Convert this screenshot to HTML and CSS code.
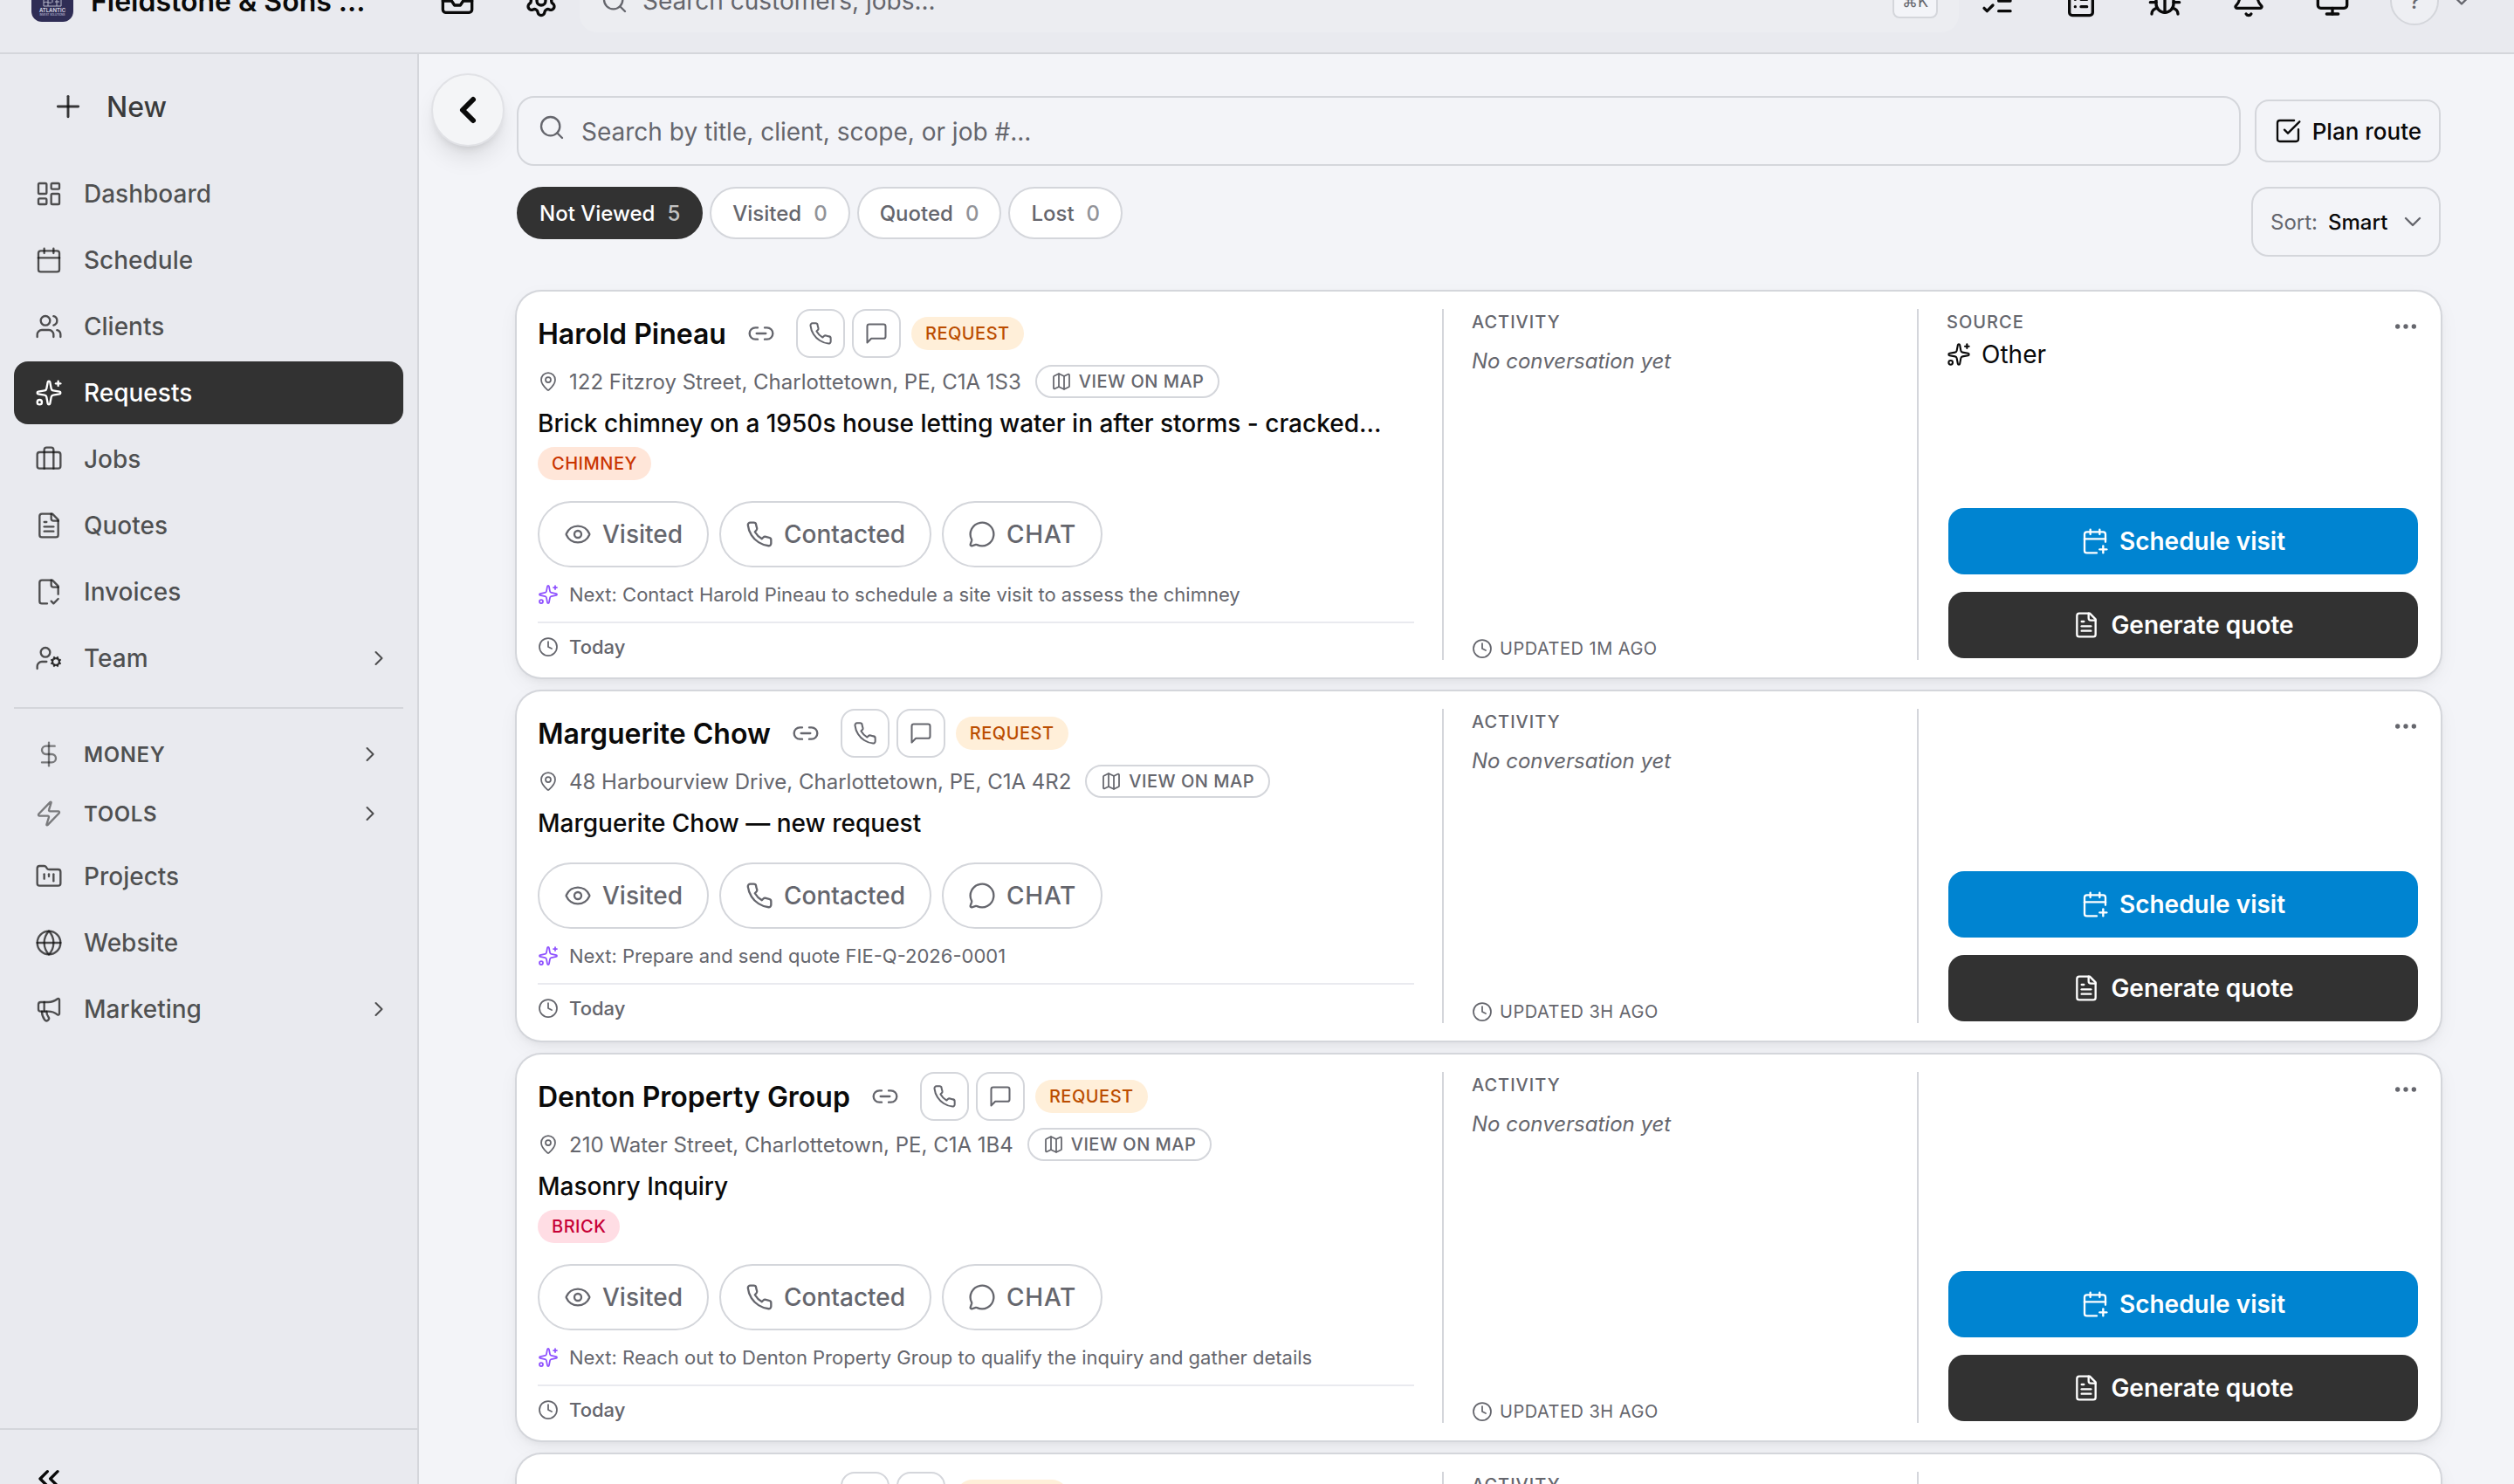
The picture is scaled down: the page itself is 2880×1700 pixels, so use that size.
FILE: index.html
```
<!DOCTYPE html>
<html lang="en">
<head>
  <meta charset="UTF-8">
  <title>Requests</title>
  <link rel="stylesheet" href="styles.css">
</head>
<body>
  <!-- icon sprite -->
  <svg class="sprite" aria-hidden="true">
    <symbol id="i-plus" viewBox="0 0 24 24"><path d="M5 12h14"/><path d="M12 5v14"/></symbol>
    <symbol id="i-dashboard" viewBox="0 0 24 24"><rect x="3" y="3" width="7" height="9" rx="1"/><rect x="14" y="3" width="7" height="5" rx="1"/><rect x="14" y="12" width="7" height="9" rx="1"/><rect x="3" y="16" width="7" height="5" rx="1"/></symbol>
    <symbol id="i-calendar" viewBox="0 0 24 24"><path d="M8 2v4"/><path d="M16 2v4"/><rect x="3" y="4" width="18" height="18" rx="2"/><path d="M3 10h18"/></symbol>
    <symbol id="i-users" viewBox="0 0 24 24"><path d="M16 21v-2a4 4 0 0 0-4-4H6a4 4 0 0 0-4 4v2"/><circle cx="9" cy="7" r="4"/><path d="M22 21v-2a4 4 0 0 0-3-3.87"/><path d="M16 3.13a4 4 0 0 1 0 7.75"/></symbol>
    <symbol id="i-sparkles" viewBox="0 0 24 24"><path d="M11.017 2.814a1 1 0 0 1 1.966 0l1.051 5.558a2 2 0 0 0 1.594 1.594l5.558 1.051a1 1 0 0 1 0 1.966l-5.558 1.051a2 2 0 0 0-1.594 1.594l-1.051 5.558a1 1 0 0 1-1.966 0l-1.051-5.558a2 2 0 0 0-1.594-1.594l-5.558-1.051a1 1 0 0 1 0-1.966l5.558-1.051a2 2 0 0 0 1.594-1.594z"/><path d="M20 2v4"/><path d="M22 4h-4"/><circle cx="4" cy="20" r="2"/></symbol>
    <symbol id="i-briefcase" viewBox="0 0 24 24"><path d="M16 20V4a2 2 0 0 0-2-2h-4a2 2 0 0 0-2 2v16"/><rect x="2" y="6" width="20" height="14" rx="2"/></symbol>
    <symbol id="i-file-text" viewBox="0 0 24 24"><path d="M15 2H6a2 2 0 0 0-2 2v16a2 2 0 0 0 2 2h12a2 2 0 0 0 2-2V7Z"/><path d="M14 2v4a2 2 0 0 0 2 2h4"/><path d="M10 9H8"/><path d="M16 13H8"/><path d="M16 17H8"/></symbol>
    <symbol id="i-file-check" viewBox="0 0 24 24"><path d="M10.5 22H6a2 2 0 0 1-2-2V4a2 2 0 0 1 2-2h9l5 5v7"/><path d="M14 2v4a2 2 0 0 0 2 2h4"/><path d="m14 20 2 2 4-4"/></symbol>
    <symbol id="i-user-cog" viewBox="0 0 24 24"><path d="M10 15H6a4 4 0 0 0-4 4v2"/><path d="m14.305 16.53.923-.382"/><path d="m15.228 13.852-.923-.383"/><path d="m16.852 12.228-.383-.923"/><path d="m16.852 17.772-.383.924"/><path d="m19.148 12.228.383-.923"/><path d="m19.53 18.696-.382-.924"/><path d="m20.772 13.852.924-.383"/><path d="m20.772 16.148.924.383"/><circle cx="18" cy="15" r="3"/><circle cx="9" cy="7" r="4"/></symbol>
    <symbol id="i-dollar" viewBox="0 0 24 24"><path d="M12 2v20"/><path d="M17 5H9.500a3.500 3.500 0 0 0 0 7h5a3.500 3.500 0 0 1 0 7H6"/></symbol>
    <symbol id="i-zap" viewBox="0 0 24 24"><path d="M4 14a1 1 0 0 1-.78-1.630l9.900-10.200a.5.5 0 0 1 .86.46l-1.920 6.020A1 1 0 0 0 13 10h7a1 1 0 0 1 .78 1.630l-9.900 10.200a.5.5 0 0 1-.86-.46l1.920-6.020A1 1 0 0 0 11 14z"/></symbol>
    <symbol id="i-folder" viewBox="0 0 24 24"><path d="M4 20h16a2 2 0 0 0 2-2V8a2 2 0 0 0-2-2h-7.930a2 2 0 0 1-1.660-.9l-.82-1.200A2 2 0 0 0 7.930 3H4a2 2 0 0 0-2 2v13c0 1.100.9 2 2 2Z"/><path d="M8 10v4"/><path d="M12 10v2"/><path d="M16 10v6"/></symbol>
    <symbol id="i-globe" viewBox="0 0 24 24"><circle cx="12" cy="12" r="10"/><path d="M12 2a14.500 14.500 0 0 0 0 20 14.500 14.500 0 0 0 0-20"/><path d="M2 12h20"/></symbol>
    <symbol id="i-megaphone" viewBox="0 0 24 24"><path d="M11 6a13 13 0 0 0 8.400-2.800A1 1 0 0 1 21 4v12a1 1 0 0 1-1.600.8A13 13 0 0 0 11 14H5a2 2 0 0 1-2-2V8a2 2 0 0 1 2-2z"/><path d="M6 14a12 12 0 0 0 2.400 7.200 2 2 0 0 0 3.200-2.400A8 8 0 0 1 10 14"/><path d="M8 6v8"/></symbol>
    <symbol id="i-chevron-right" viewBox="0 0 24 24"><path d="m9 18 6-6-6-6"/></symbol>
    <symbol id="i-chevron-left" viewBox="0 0 24 24"><path d="m15 18-6-6 6-6"/></symbol>
    <symbol id="i-chevron-down" viewBox="0 0 24 24"><path d="m6 9 6 6 6-6"/></symbol>
    <symbol id="i-chevrons-left" viewBox="0 0 24 24"><path d="m11 17-5-5 5-5"/><path d="m18 17-5-5 5-5"/></symbol>
    <symbol id="i-inbox" viewBox="0 0 24 24"><path d="M22 12h-6l-2 3h-4l-2-3H2"/><path d="M5.450 5.110 2 12v6a2 2 0 0 0 2 2h16a2 2 0 0 0 2-2v-6l-3.450-6.890A2 2 0 0 0 16.760 4H7.240a2 2 0 0 0-1.790 1.110z"/></symbol>
    <symbol id="i-settings" viewBox="0 0 24 24"><path d="M9.671 4.136a2.340 2.340 0 0 1 4.659 0 2.340 2.340 0 0 0 3.319 1.915 2.340 2.340 0 0 1 2.330 4.033 2.340 2.340 0 0 0 0 3.831 2.340 2.340 0 0 1-2.330 4.033 2.340 2.340 0 0 0-3.319 1.915 2.340 2.340 0 0 1-4.659 0 2.340 2.340 0 0 0-3.320-1.915 2.340 2.340 0 0 1-2.330-4.033 2.340 2.340 0 0 0 0-3.831A2.340 2.340 0 0 1 6.350 6.051a2.340 2.340 0 0 0 3.319-1.915"/><circle cx="12" cy="12" r="3"/></symbol>
    <symbol id="i-search" viewBox="0 0 24 24"><circle cx="11" cy="11" r="8"/><path d="m21 21-4.340-4.340"/></symbol>
    <symbol id="i-list-checks" viewBox="0 0 24 24"><path d="M13 5h8"/><path d="M13 12h8"/><path d="M13 19h8"/><path d="m3 17 2 2 4-4"/><path d="m3 7 2 2 4-4"/></symbol>
    <symbol id="i-clipboard" viewBox="0 0 24 24"><rect x="8" y="2" width="8" height="4" rx="1"/><path d="M16 4h2a2 2 0 0 1 2 2v14a2 2 0 0 1-2 2H6a2 2 0 0 1-2-2V6a2 2 0 0 1 2-2h2"/><path d="M12 11h4"/><path d="M12 16h4"/><path d="M8 11h.01"/><path d="M8 16h.01"/></symbol>
    <symbol id="i-bug" viewBox="0 0 24 24"><path d="m8 2 1.880 1.880"/><path d="M14.120 3.880 16 2"/><path d="M9 7.130v-1a3 3 0 1 1 6 0v1"/><path d="M12 20c-3.300 0-6-2.700-6-6v-3a4 4 0 0 1 4-4h4a4 4 0 0 1 4 4v3c0 3.300-2.700 6-6 6"/><path d="M12 20v-9"/><path d="M6.530 9C4.600 8.800 3 7.100 3 5"/><path d="M6 13H2"/><path d="M3 21c0-2.100 1.700-3.900 3.800-4"/><path d="M20.970 5c0 2.100-1.600 3.800-3.500 4"/><path d="M22 13h-4"/><path d="M17.200 17c2.100.1 3.800 1.900 3.800 4"/></symbol>
    <symbol id="i-bell" viewBox="0 0 24 24"><path d="M10.268 21a2 2 0 0 0 3.464 0"/><path d="M3.262 15.326A1 1 0 0 0 4 17h16a1 1 0 0 0 .74-1.673C19.410 13.956 18 12.499 18 8A6 6 0 0 0 6 8c0 4.499-1.411 5.956-2.738 7.326"/></symbol>
    <symbol id="i-monitor" viewBox="0 0 24 24"><rect x="2" y="3" width="20" height="14" rx="2"/><path d="M8 21h8"/><path d="M12 17v4"/></symbol>
    <symbol id="i-check-square" viewBox="0 0 24 24"><path d="M21 10.656V19a2 2 0 0 1-2 2H5a2 2 0 0 1-2-2V5a2 2 0 0 1 2-2h12.344"/><path d="m9 11 3 3L22 4"/></symbol>
    <symbol id="i-link" viewBox="0 0 24 24"><path d="M9 17H7A5 5 0 0 1 7 7h2"/><path d="M15 7h2a5 5 0 1 1 0 10h-2"/><path d="M8 12h8"/></symbol>
    <symbol id="i-phone" viewBox="0 0 24 24"><path d="M22 16.920v3a2 2 0 0 1-2.180 2 19.790 19.790 0 0 1-8.630-3.070 19.500 19.500 0 0 1-6-6 19.790 19.790 0 0 1-3.070-8.670A2 2 0 0 1 4.110 2h3a2 2 0 0 1 2 1.720 12.840 12.840 0 0 0 .7 2.810 2 2 0 0 1-.45 2.110L8.090 9.910a16 16 0 0 0 6 6l1.270-1.270a2 2 0 0 1 2.110-.45 12.840 12.840 0 0 0 2.810.7A2 2 0 0 1 22 16.920z"/></symbol>
    <symbol id="i-message" viewBox="0 0 24 24"><path d="M21 15a2 2 0 0 1-2 2H7l-4 4V5a2 2 0 0 1 2-2h14a2 2 0 0 1 2 2z"/></symbol>
    <symbol id="i-chat" viewBox="0 0 24 24"><path d="M2.992 16.342a2 2 0 0 1 .094 1.167l-1.065 3.290a1 1 0 0 0 1.236 1.168l3.413-.998a2 2 0 0 1 1.099.092 10 10 0 1 0-4.777-4.719"/></symbol>
    <symbol id="i-eye" viewBox="0 0 24 24"><path d="M2.062 12.348a1 1 0 0 1 0-.696 10.750 10.750 0 0 1 19.876 0 1 1 0 0 1 0 .696 10.750 10.750 0 0 1-19.876 0"/><circle cx="12" cy="12" r="3"/></symbol>
    <symbol id="i-pin" viewBox="0 0 24 24"><path d="M20 10c0 4.993-5.539 10.193-7.399 11.799a1 1 0 0 1-1.202 0C9.539 20.193 4 14.993 4 10a8 8 0 0 1 16 0"/><circle cx="12" cy="10" r="3"/></symbol>
    <symbol id="i-map" viewBox="0 0 24 24"><path d="M14.106 5.553a2 2 0 0 0 1.788 0l3.659-1.830A1 1 0 0 1 21 4.619v12.764a1 1 0 0 1-.553.894l-4.553 2.277a2 2 0 0 1-1.788 0l-4.212-2.106a2 2 0 0 0-1.788 0l-3.659 1.830A1 1 0 0 1 3 19.381V6.618a1 1 0 0 1 .553-.894l4.553-2.277a2 2 0 0 1 1.788 0z"/><path d="M15 5.764v15"/><path d="M9 3.236v15"/></symbol>
    <symbol id="i-clock" viewBox="0 0 24 24"><circle cx="12" cy="12" r="10"/><path d="M12 6v6l4 2"/></symbol>
    <symbol id="i-calendar-plus" viewBox="0 0 24 24"><path d="M16 19h6"/><path d="M16 2v4"/><path d="M19 16v6"/><path d="M21 12.598V6a2 2 0 0 0-2-2H5a2 2 0 0 0-2 2v14a2 2 0 0 0 2 2h8.500"/><path d="M3 10h18"/><path d="M8 2v4"/></symbol>
    <symbol id="i-dots" viewBox="0 0 24 24"><circle cx="12" cy="12" r="1"/><circle cx="19" cy="12" r="1"/><circle cx="5" cy="12" r="1"/></symbol>
  </svg>

  <div class="app">
    <header class="topbar">
      <div class="brand">
        <svg class="brand-logo" viewBox="0 0 48 48" role="img" aria-label="Atlantic">
          <rect width="48" height="48" rx="12" fill="#2f2d55"/>
          <g fill="none" stroke="#b9bacb" stroke-width="1">
            <path d="M14 30V14l10-5 10 5v16M14 30h20M19 30V12M24 26V9M29 30V12"/>
            <path d="M14 22c5-3 8 2 12-1s5-1 8 0M14 26c4-2 6 1 9 0M27 25h5"/>
          </g>
          <text x="24" y="37" class="logo-name">ATLANTIC</text>
          <text x="24" y="41" class="logo-sub">INVEST SOLUTIONS</text>
        </svg>
        <span class="brand-name">Fieldstone &amp; Sons ...</span>
      </div>
      <button class="top-btn" aria-label="Inbox"><svg class="icon icon-xl"><use href="#i-inbox"/></svg></button>
      <button class="top-btn" aria-label="Settings"><svg class="icon icon-xl"><use href="#i-settings"/></svg></button>
      <label class="top-search">
        <svg class="icon"><use href="#i-search"/></svg>
        <input type="search" placeholder="Search customers, jobs..." aria-label="Search customers, jobs">
        <kbd>⌘K</kbd>
      </label>
      <button class="top-btn" aria-label="Tasks"><svg class="icon icon-xl"><use href="#i-list-checks"/></svg></button>
      <button class="top-btn" aria-label="Forms"><svg class="icon icon-xl"><use href="#i-clipboard"/></svg></button>
      <button class="top-btn" aria-label="Report a bug"><svg class="icon icon-xl"><use href="#i-bug"/></svg></button>
      <button class="top-btn" aria-label="Notifications"><svg class="icon icon-xl"><use href="#i-bell"/></svg></button>
      <button class="top-btn" aria-label="Display"><svg class="icon icon-xl"><use href="#i-monitor"/></svg></button>
      <button class="account" aria-label="Account">
        <span class="avatar">?</span>
        <svg class="icon icon-md"><use href="#i-chevron-down"/></svg>
      </button>
    </header>

    <div class="body">
      <aside class="sidebar">
        <nav class="nav">
          <button class="nav-new"><svg class="icon icon-xl"><use href="#i-plus"/></svg>New</button>
          <a class="nav-item" href="#"><svg class="icon"><use href="#i-dashboard"/></svg>Dashboard</a>
          <a class="nav-item" href="#"><svg class="icon"><use href="#i-calendar"/></svg>Schedule</a>
          <a class="nav-item" href="#"><svg class="icon"><use href="#i-users"/></svg>Clients</a>
          <a class="nav-item active" href="#" aria-current="page"><svg class="icon"><use href="#i-sparkles"/></svg>Requests</a>
          <a class="nav-item" href="#"><svg class="icon"><use href="#i-briefcase"/></svg>Jobs</a>
          <a class="nav-item" href="#"><svg class="icon"><use href="#i-file-text"/></svg>Quotes</a>
          <a class="nav-item" href="#"><svg class="icon"><use href="#i-file-check"/></svg>Invoices</a>
          <a class="nav-item" href="#"><svg class="icon"><use href="#i-user-cog"/></svg>Team<svg class="icon icon-md chevron"><use href="#i-chevron-right"/></svg></a>
          <hr class="nav-divider">
          <button class="nav-section"><svg class="icon"><use href="#i-dollar"/></svg>MONEY<svg class="icon icon-md chevron"><use href="#i-chevron-right"/></svg></button>
          <button class="nav-section"><svg class="icon"><use href="#i-zap"/></svg>TOOLS<svg class="icon icon-md chevron"><use href="#i-chevron-right"/></svg></button>
          <a class="nav-item" href="#"><svg class="icon"><use href="#i-folder"/></svg>Projects</a>
          <a class="nav-item" href="#"><svg class="icon"><use href="#i-globe"/></svg>Website</a>
          <a class="nav-item" href="#"><svg class="icon"><use href="#i-megaphone"/></svg>Marketing<svg class="icon icon-md chevron"><use href="#i-chevron-right"/></svg></a>
        </nav>
        <div class="sidebar-footer">
          <button class="collapse" aria-label="Collapse sidebar"><svg class="icon icon-xl"><use href="#i-chevrons-left"/></svg></button>
        </div>
      </aside>

      <main class="content">
        <button class="back" aria-label="Back"><svg class="icon"><use href="#i-chevron-left"/></svg></button>

        <div class="toolbar">
          <label class="search">
            <svg class="icon"><use href="#i-search"/></svg>
            <input type="text" placeholder="Search by title, client, scope, or job #..." aria-label="Search requests">
          </label>
          <button class="plan"><svg class="icon"><use href="#i-check-square"/></svg>Plan route</button>
        </div>

        <div class="filters">
          <div class="tabs">
            <button class="tab active">Not Viewed <span class="count">5</span></button>
            <button class="tab">Visited <span class="count">0</span></button>
            <button class="tab">Quoted <span class="count">0</span></button>
            <button class="tab">Lost <span class="count">0</span></button>
          </div>
          <div class="sort">
            <label for="sort">Sort:</label>
            <select id="sort"><option>Smart</option></select>
            <svg class="icon"><use href="#i-chevron-down"/></svg>
          </div>
        </div>

        <div class="cards">
          <article class="card">
            <section class="main">
              <div class="title-row">
                <h2>Harold Pineau</h2>
                <a class="link" href="#" aria-label="Copy link"><svg class="icon"><use href="#i-link"/></svg></a>
                <div class="contact">
                  <button class="square" aria-label="Call"><svg class="icon icon-md"><use href="#i-phone"/></svg></button>
                  <button class="square" aria-label="Message"><svg class="icon icon-md"><use href="#i-message"/></svg></button>
                </div>
                <span class="badge request">REQUEST</span>
              </div>
              <div class="address">
                <svg class="icon icon-sm"><use href="#i-pin"/></svg>
                <span>122 Fitzroy Street, Charlottetown, PE, C1A 1S3</span>
                <a class="map" href="#"><svg class="icon icon-sm"><use href="#i-map"/></svg>VIEW ON MAP</a>
              </div>
              <h3>Brick chimney on a 1950s house letting water in after storms - cracked…</h3>
              <div class="tags"><span class="badge chimney">CHIMNEY</span></div>
              <div class="actions">
                <button class="pill"><svg class="icon"><use href="#i-eye"/></svg>Visited</button>
                <button class="pill"><svg class="icon"><use href="#i-phone"/></svg>Contacted</button>
                <button class="pill chat"><svg class="icon"><use href="#i-chat"/></svg>CHAT</button>
              </div>
              <p class="next"><svg class="icon icon-sm"><use href="#i-sparkles"/></svg>Next: Contact Harold Pineau to schedule a site visit to assess the chimney</p>
              <p class="date"><svg class="icon icon-sm"><use href="#i-clock"/></svg>Today</p>
            </section>
            <section class="activity">
              <h4>ACTIVITY</h4>
              <p class="empty">No conversation yet</p>
              <p class="updated"><svg class="icon icon-sm"><use href="#i-clock"/></svg>UPDATED 1M AGO</p>
            </section>
            <section class="side">
              <div class="side-head">
                <div>
                  <h4>SOURCE</h4>
                  <p class="source"><svg class="icon icon-md"><use href="#i-sparkles"/></svg>Other</p>
                </div>
                <button class="more" aria-label="More"><svg class="icon"><use href="#i-dots"/></svg></button>
              </div>
              <div class="cta">
                <button class="btn blue"><svg class="icon"><use href="#i-calendar-plus"/></svg>Schedule visit</button>
                <button class="btn dark"><svg class="icon"><use href="#i-file-text"/></svg>Generate quote</button>
              </div>
            </section>
          </article>

          <article class="card">
            <section class="main">
              <div class="title-row">
                <h2>Marguerite Chow</h2>
                <a class="link" href="#" aria-label="Copy link"><svg class="icon"><use href="#i-link"/></svg></a>
                <div class="contact">
                  <button class="square" aria-label="Call"><svg class="icon icon-md"><use href="#i-phone"/></svg></button>
                  <button class="square" aria-label="Message"><svg class="icon icon-md"><use href="#i-message"/></svg></button>
                </div>
                <span class="badge request">REQUEST</span>
              </div>
              <div class="address">
                <svg class="icon icon-sm"><use href="#i-pin"/></svg>
                <span>48 Harbourview Drive, Charlottetown, PE, C1A 4R2</span>
                <a class="map" href="#"><svg class="icon icon-sm"><use href="#i-map"/></svg>VIEW ON MAP</a>
              </div>
              <h3>Marguerite Chow — new request</h3>
              <div class="actions">
                <button class="pill"><svg class="icon"><use href="#i-eye"/></svg>Visited</button>
                <button class="pill"><svg class="icon"><use href="#i-phone"/></svg>Contacted</button>
                <button class="pill chat"><svg class="icon"><use href="#i-chat"/></svg>CHAT</button>
              </div>
              <p class="next"><svg class="icon icon-sm"><use href="#i-sparkles"/></svg>Next: Prepare and send quote FIE-Q-2026-0001</p>
              <p class="date"><svg class="icon icon-sm"><use href="#i-clock"/></svg>Today</p>
            </section>
            <section class="activity">
              <h4>ACTIVITY</h4>
              <p class="empty">No conversation yet</p>
              <p class="updated"><svg class="icon icon-sm"><use href="#i-clock"/></svg>UPDATED 3H AGO</p>
            </section>
            <section class="side">
              <div class="side-head">
                <button class="more" aria-label="More"><svg class="icon"><use href="#i-dots"/></svg></button>
              </div>
              <div class="cta">
                <button class="btn blue"><svg class="icon"><use href="#i-calendar-plus"/></svg>Schedule visit</button>
                <button class="btn dark"><svg class="icon"><use href="#i-file-text"/></svg>Generate quote</button>
              </div>
            </section>
          </article>

          <article class="card">
            <section class="main">
              <div class="title-row">
                <h2>Denton Property Group</h2>
                <a class="link" href="#" aria-label="Copy link"><svg class="icon"><use href="#i-link"/></svg></a>
                <div class="contact">
                  <button class="square" aria-label="Call"><svg class="icon icon-md"><use href="#i-phone"/></svg></button>
                  <button class="square" aria-label="Message"><svg class="icon icon-md"><use href="#i-message"/></svg></button>
                </div>
                <span class="badge request">REQUEST</span>
              </div>
              <div class="address">
                <svg class="icon icon-sm"><use href="#i-pin"/></svg>
                <span>210 Water Street, Charlottetown, PE, C1A 1B4</span>
                <a class="map" href="#"><svg class="icon icon-sm"><use href="#i-map"/></svg>VIEW ON MAP</a>
              </div>
              <h3>Masonry Inquiry</h3>
              <div class="tags"><span class="badge brick">BRICK</span></div>
              <div class="actions">
                <button class="pill"><svg class="icon"><use href="#i-eye"/></svg>Visited</button>
                <button class="pill"><svg class="icon"><use href="#i-phone"/></svg>Contacted</button>
                <button class="pill chat"><svg class="icon"><use href="#i-chat"/></svg>CHAT</button>
              </div>
              <p class="next"><svg class="icon icon-sm"><use href="#i-sparkles"/></svg>Next: Reach out to Denton Property Group to qualify the inquiry and gather details</p>
              <p class="date"><svg class="icon icon-sm"><use href="#i-clock"/></svg>Today</p>
            </section>
            <section class="activity">
              <h4>ACTIVITY</h4>
              <p class="empty">No conversation yet</p>
              <p class="updated"><svg class="icon icon-sm"><use href="#i-clock"/></svg>UPDATED 3H AGO</p>
            </section>
            <section class="side">
              <div class="side-head">
                <button class="more" aria-label="More"><svg class="icon"><use href="#i-dots"/></svg></button>
              </div>
              <div class="cta">
                <button class="btn blue"><svg class="icon"><use href="#i-calendar-plus"/></svg>Schedule visit</button>
                <button class="btn dark"><svg class="icon"><use href="#i-file-text"/></svg>Generate quote</button>
              </div>
            </section>
          </article>

          <article class="card">
            <section class="main">
              <div class="title-row">
                <h2>Marguerite Chow</h2>
                <a class="link" href="#" aria-label="Copy link"><svg class="icon"><use href="#i-link"/></svg></a>
                <div class="contact">
                  <button class="square" aria-label="Call"><svg class="icon icon-md"><use href="#i-phone"/></svg></button>
                  <button class="square" aria-label="Message"><svg class="icon icon-md"><use href="#i-message"/></svg></button>
                </div>
                <span class="badge request">REQUEST</span>
              </div>
            </section>
            <section class="activity">
              <h4>ACTIVITY</h4>
            </section>
            <section class="side"></section>
          </article>
        </div>
      </main>
    </div>
  </div>
</body>
</html>
```

FILE: styles.css
```
* {
  box-sizing: border-box;
}

body {
  margin: 0;
  height: 100vh;
  overflow: hidden;
  font-family: Inter, "Liberation Sans", sans-serif;
  font-size: 28px;
  color: #0a0a0a;
  background: #f3f4f8;
}

button, input, select {
  font: inherit;
  color: inherit;
  border: 0;
  padding: 0;
  background: none;
}

button {
  display: flex;
  align-items: center;
  justify-content: center;
  cursor: pointer;
}

a {
  color: inherit;
  text-decoration: none;
}

h2, h3, h4, p {
  margin: 0;
}

.sprite {
  display: none;
}

.icon {
  width: 32px;
  height: 32px;
  flex: none;
  fill: none;
  stroke: currentColor;
  stroke-width: 1.75;
  stroke-linecap: round;
  stroke-linejoin: round;
}

.icon-sm {
  width: 24px;
  height: 24px;
}

.icon-md {
  width: 28px;
  height: 28px;
}

.icon-xl {
  width: 40px;
  height: 40px;
}

/* the top bar is partly scrolled out of view */
.app {
  display: flex;
  flex-direction: column;
  height: calc(100vh + 108px);
  margin-top: -58px;
}

/* top bar */
.topbar {
  display: flex;
  align-items: center;
  gap: 8px;
  flex: none;
  height: 120px;
  padding-right: 46px;
  background: #e9eaef;
  border-bottom: 2px solid #d4d6db;
}

.brand {
  display: flex;
  align-items: center;
  gap: 20px;
  width: 472px;
  padding-left: 36px;
}

.brand-logo {
  width: 48px;
  height: 48px;
}

.logo-name, .logo-sub {
  fill: #dcdce6;
  text-anchor: middle;
}

.logo-name {
  font-size: 6px;
  font-weight: 600;
}

.logo-sub {
  font-size: 3px;
}

.brand-name {
  font-size: 32px;
  font-weight: 600;
  white-space: nowrap;
}

.top-btn {
  width: 88px;
  height: 88px;
}

.top-btn .icon, .account .icon {
  stroke-width: 2;
}

.top-search {
  display: flex;
  align-items: center;
  gap: 16px;
  flex: 1;
  height: 72px;
  margin: 0 -8px;
  padding: 0 24px;
  border-radius: 20px;
  background: #ecedf1;
  color: #65666d;
}

.top-search input {
  flex: 1;
  outline: none;
}

.top-search input::placeholder, .search input::placeholder {
  color: #65666d;
  opacity: 1;
}

kbd {
  display: flex;
  align-items: center;
  justify-content: center;
  width: 52px;
  height: 40px;
  border: 2px solid #d4d6db;
  border-radius: 8px;
  background: #f3f4f8;
  font-family: inherit;
  font-size: 18px;
}

.account {
  gap: 12px;
  margin-left: 14px;
  color: #65666d;
}

.avatar {
  display: flex;
  align-items: center;
  justify-content: center;
  width: 56px;
  height: 56px;
  border: 2px solid #d4d6db;
  border-radius: 50%;
  background: #eeeff3;
  font-size: 24px;
  font-weight: 500;
}

.body {
  display: flex;
  flex: 1;
  min-height: 0;
}

/* sidebar */
.sidebar {
  display: flex;
  flex-direction: column;
  width: 480px;
  flex: none;
  background: #e9eaef;
  border-right: 2px solid #d4d6db;
}

.nav {
  display: flex;
  flex-direction: column;
  gap: 4px;
  flex: 1;
  padding: 20px 16px;
  color: rgba(10, 10, 10, .7);
  font-weight: 500;
}

.nav-new {
  justify-content: flex-start;
  gap: 24px;
  height: 80px;
  margin-bottom: 20px;
  padding-left: 42px;
  font-size: 32px;
  color: rgba(10, 10, 10, .8);
}

.nav-item, .nav-section {
  display: flex;
  align-items: center;
  justify-content: flex-start;
  gap: 24px;
  height: 72px;
  padding: 0 14px 0 24px;
  border-radius: 16px;
}

.nav-item.active {
  background: #323232;
  color: #fff;
}

.nav-section {
  height: 64px;
  padding-right: 24px;
  font-size: 24px;
  font-weight: 600;
  letter-spacing: 0.025em;
}

.nav-section .icon:first-child {
  color: rgba(10, 10, 10, .5);
}

.nav .chevron {
  margin-left: auto;
}

.nav-divider {
  width: 100%;
  height: 2px;
  margin: 16px 0;
  border: 0;
  background: #d4d6db;
}

.sidebar-footer {
  display: flex;
  align-items: center;
  height: 114px;
  padding-left: 36px;
  border-top: 2px solid #d4d6db;
}

.collapse .icon {
  stroke-width: 2;
}

/* content */
.content {
  position: relative;
  flex: 1;
  min-width: 0;
  padding: 48px 84px 0 112px;
  overflow: hidden;
}

.back {
  position: absolute;
  top: 22px;
  left: 14px;
  width: 84px;
  height: 84px;
  border: 2px solid #e1e2e6;
  border-radius: 50%;
  background: #f4f5f7;
  box-shadow: 0 16px 28px -6px rgba(0, 0, 0, .12), 0 6px 10px -4px rgba(0, 0, 0, .1);
}

.back .icon {
  width: 48px;
  height: 48px;
  stroke-width: 3;
}

.toolbar {
  display: flex;
  align-items: center;
  gap: 16px;
}

.search {
  position: relative;
  flex: 1;
  color: #65666d;
}

.search .icon {
  position: absolute;
  top: 20px;
  left: 24px;
}

.search input {
  display: block;
  width: 100%;
  height: 80px;
  padding: 2px 24px 0 72px;
  border: 2px solid #d4d6db;
  border-radius: 20px;
  outline: none;
}

.plan {
  gap: 12px;
  height: 72px;
  padding: 0 20px;
  border: 2px solid #d4d6db;
  border-radius: 16px;
  font-size: 26px;
  font-weight: 500;
}

.filters {
  display: flex;
  align-items: flex-start;
  justify-content: space-between;
  margin-top: 24px;
  font-size: 24px;
}

.tabs {
  display: flex;
  gap: 8px;
}

.tab {
  gap: 14px;
  height: 60px;
  padding: 0 24px;
  border: 2px solid #d4d6db;
  border-radius: 30px;
  background: #fff;
  color: #65666d;
  font-weight: 500;
}

.tab.active {
  border-color: #323232;
  background: #323232;
  color: #fff;
}

.count {
  opacity: .7;
}

.sort {
  display: flex;
  align-items: center;
  gap: 12px;
  height: 80px;
  padding: 0 14px 0 20px;
  border: 2px solid #d4d6db;
  border-radius: 20px;
  color: #65666d;
}

.sort select {
  appearance: none;
  color: #0a0a0a;
  font-weight: 500;
}

/* request cards */
.cards {
  display: flex;
  flex-direction: column;
  gap: 16px;
  margin-top: 40px;
}

.card {
  display: grid;
  grid-template-columns: 1fr 512px 576px;
  column-gap: 32px;
  min-height: 400px;
  padding: 20px 24px;
  border-radius: 28px;
  background: #fff;
  box-shadow: 0 0 0 2px #d4d6db, 0 4px 8px rgba(0, 0, 0, .05), 0 8px 24px rgba(0, 0, 0, .05);
}

.main {
  display: flex;
  flex-direction: column;
  color: #65666d;
}

.title-row {
  display: flex;
  align-items: center;
  height: 56px;
}

.title-row h2 {
  color: #0a0a0a;
  font-size: 32px;
  font-weight: 600;
}

.link {
  display: flex;
  margin: 0 24px;
}

.contact {
  display: flex;
  gap: 8px;
  margin-right: 12px;
}

.square {
  width: 56px;
  height: 56px;
  border: 2px solid #d4d6db;
  border-radius: 16px;
}

.badge {
  height: 38px;
  padding: 0 16px;
  border-radius: 19px;
  font-size: 20px;
  font-weight: 500;
  line-height: 38px;
  letter-spacing: 0.025em;
}

.badge.request {
  background: #ffefd9;
  color: #bb4d00;
}

.badge.chimney {
  background: #ffe6d9;
  color: #ca3500;
}

.badge.brick {
  background: #ffdde4;
  color: #c70036;
}

.address {
  display: flex;
  align-items: center;
  gap: 12px;
  margin-top: 8px;
  font-size: 24px;
}

.map {
  display: flex;
  align-items: center;
  gap: 8px;
  height: 38px;
  margin-left: 4px;
  padding: 0 16px;
  border: 2px solid #d4d6db;
  border-radius: 19px;
  font-size: 20px;
  font-weight: 500;
  letter-spacing: 0.025em;
}

.main h3 {
  margin-top: 8px;
  color: #0a0a0a;
  font-size: 28px;
  font-weight: 500;
  line-height: 42px;
  white-space: nowrap;
  overflow: hidden;
  text-overflow: ellipsis;
}

.tags {
  display: flex;
  gap: 8px;
  margin-top: 6px;
}

.actions {
  display: flex;
  gap: 12px;
  margin-top: 24px;
}

.pill {
  gap: 12px;
  height: 76px;
  padding: 0 28px;
  border: 2px solid #d4d6db;
  border-radius: 38px;
  font-weight: 500;
}

.pill.chat {
  letter-spacing: 0.025em;
}

.next, .date, .updated {
  display: flex;
  align-items: center;
  gap: 12px;
  font-size: 22px;
  line-height: 30px;
}

.next {
  padding: 16px 0;
}

.next .icon {
  color: #8e51ff;
}

.date {
  padding-top: 12px;
  border-top: 2px solid #e9eaef;
  font-weight: 500;
}

.activity, .side {
  display: flex;
  flex-direction: column;
  border-left: 2px solid #d4d6db;
  padding-left: 32px;
}

.side {
  justify-content: space-between;
}

h4 {
  color: #65666d;
  font-size: 20px;
  font-weight: 500;
  line-height: 30px;
  letter-spacing: 0.05em;
}

.empty {
  margin-top: 12px;
  color: #65666d;
  font-size: 24px;
  font-style: italic;
  line-height: 36px;
}

.updated {
  gap: 8px;
  margin-top: auto;
  color: #65666d;
  font-size: 20px;
  line-height: 26px;
  letter-spacing: 0.025em;
}

.side-head {
  display: flex;
  justify-content: space-between;
}

.source {
  display: flex;
  align-items: center;
  gap: 12px;
  line-height: 44px;
}

.more {
  height: 40px;
  margin-left: auto;
  color: #65666d;
}

.more .icon {
  stroke-width: 2;
}

.cta {
  display: flex;
  flex-direction: column;
  gap: 16px;
}

.btn {
  gap: 12px;
  height: 80px;
  border: 2px solid transparent;
  border-radius: 20px;
  background-clip: padding-box;
  color: #fff;
  font-weight: 600;
}

.btn.blue {
  background-color: #0084d1;
}

.btn.dark {
  background-color: #323232;
}
```
